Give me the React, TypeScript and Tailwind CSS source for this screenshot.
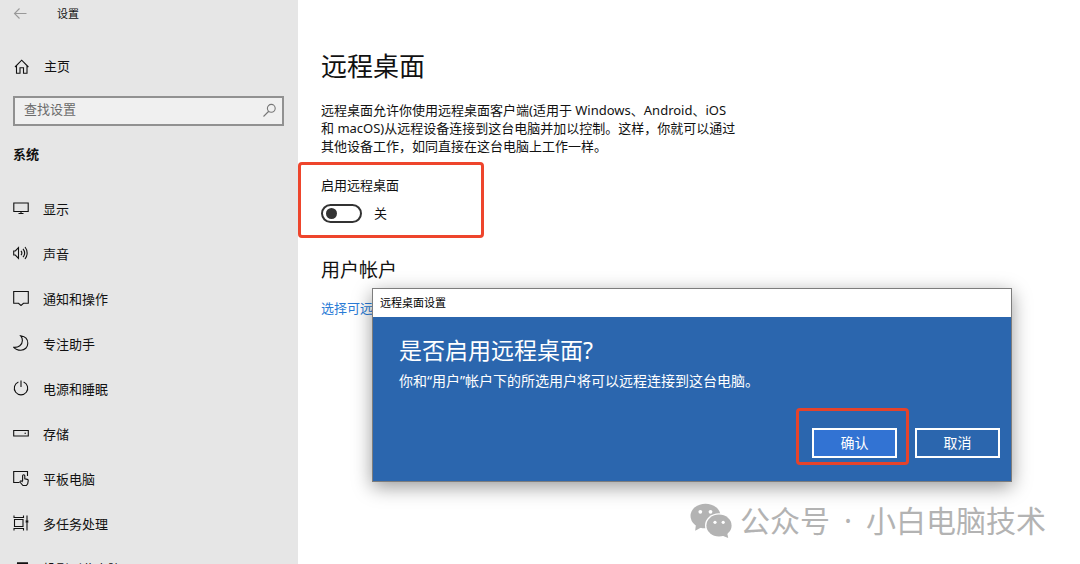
import { useState, type ReactNode } from 'react'

function Icon({ children }: { children: ReactNode }) {
  return (
    <svg
      className="size-4 shrink-0"
      viewBox="0 0 16 16"
      fill="none"
      stroke="currentColor"
      strokeWidth="1.1"
      aria-hidden="true"
    >
      {children}
    </svg>
  )
}

function WeChatLogo() {
  return (
    <svg className="h-9 w-[42px]" viewBox="0 0 42 36" fill="currentColor" aria-hidden="true">
      <ellipse cx="15.5" cy="13" rx="15" ry="12.3" />
      <path d="M6 21 5.200 27.800 12 24z" />
      <ellipse cx="29" cy="22.500" rx="14" ry="12.300" fill="#fff" />
      <ellipse cx="29" cy="22.500" rx="12.600" ry="11" />
      <path d="M37 29l1.200 6L32 32.500z" />
      <g fill="#fff">
        <circle cx="10.300" cy="8.800" r="1.900" />
        <circle cx="20.500" cy="8.800" r="1.900" />
        <circle cx="25" cy="19.300" r="1.600" />
        <circle cx="33.200" cy="19.300" r="1.600" />
      </g>
    </svg>
  )
}

const items = [
  {
    label: '显示',
    icon: <path d="M.8 3h14.4v8.5H.8zM8 11.500v2M5.500 13.500h5" />,
  },
  {
    label: '声音',
    icon: (
      <path d="M.7 6h1.600l3.200-3.400v10.800L2.300 10H.7zM8 5.800a3.600 3.600 0 0 1 0 4.400M10 3.900a6.500 6.500 0 0 1 0 8.200M12 2a9.500 9.500 0 0 1 0 12" />
    ),
  },
  {
    label: '通知和操作',
    icon: <path d="M.7 1.500h14.600v11.800h-4.800L8 15.500l-2.500-2.200H.7z" />,
  },
  {
    label: '专注助手',
    icon: (
      <path d="M7.700.8C12 1.400 14.800 4.400 14.800 8.300c0 4-3 6.900-6.900 6.900-3 0-5.500-1-7.100-2.900C5.500 12.600 9.400 10 9.400 5.600 9.400 3.700 8.800 2 7.700.8z" />
    ),
  },
  {
    label: '电源和睡眠',
    icon: <path d="M5.400 2a6.700 6.700 0 1 0 5.200 0M8 .500v6.500" />,
  },
  {
    label: '存储',
    icon: <path d="M.700 5.500h14.600v5.500H.700zM11.500 8.200h1.500" />,
  },
  {
    label: '平板电脑',
    icon: (
      <>
        <path d="M6.500 12.500H.700v-11h13.800v4.500" />
        <path d="M9.600 11V5.800a1.100 1.100 0 0 1 2.200 0v3l2.500.600q1.100.300.900 1.500l-.500 2.900-1.400 1.700h-3.300L7.300 12.500c-.800-1.200.500-2.200 1.400-1.400l.900.900" />
      </>
    ),
  },
  {
    label: '多任务处理',
    icon: (
      <>
        <path d="M1 .500v2h9.500v-2M1 15.500v-2h9.500v2M1.500 4.500h8.500v7H1.500zM14 .500V5M14 8v7.500" />
        <path d="M12.700 5.200h2.600v2.600h-2.600z" fill="currentColor" stroke="none" />
      </>
    ),
  },
  {
    label: '投影到此电脑',
    icon: <path d="M4.500 3.500h10v8H9M4.500 3v3.500M1 8h6v6H1zM4 2.800h11" />,
  },
]

function Sidebar() {
  return (
    <aside className="w-[298px] shrink-0 bg-[#e6e6e6]">
      <div className="flex h-7 items-center gap-7 px-[13px]">
        <button type="button" aria-label="返回" className="text-[#999]">
          <Icon>
            <path d="M13.500 7.500h-12M6.500 2.500l-5 5 5 5" />
          </Icon>
        </button>
        <span className="text-[11px]">设置</span>
      </div>

      <a href="#home" className="mt-[19px] flex h-10 items-center gap-[14px] px-[14px]">
        <Icon>
          <path d="M1 8 7.700 1.200 14.400 8M2.500 6.700v7.500H6V8.700h3.500v5.500H13V6.700" />
        </Icon>
        主页
      </a>

      <div className="relative mx-[13px] mt-[9px] mr-[14px]">
        <input
          type="text"
          aria-label="查找设置"
          placeholder="查找设置"
          className="block h-[30px] w-full border-2 border-[#919191] bg-[#f0f0f0] pr-8 pb-1 pl-[9px] placeholder:text-[#6b6b6b]"
        />
        <span className="absolute top-[7px] right-[6px] text-[#777]">
          <Icon>
            <path d="M1.500 13.500l5-5M13.200 5.300a3.900 3.900 0 1 1-7.800 0 3.900 3.900 0 0 1 7.800 0z" />
          </Icon>
        </span>
      </div>

      <h2 className="mt-[18px] px-[13px] leading-5 font-bold">系统</h2>

      <nav className="mt-[23px]">
        {items.map(item => (
          <a key={item.label} href="#" className="flex h-[45px] items-center gap-[14px] px-[13px]">
            <span className="pb-[3px]">
              <Icon>{item.icon}</Icon>
            </span>
            {item.label}
          </a>
        ))}
      </nav>
    </aside>
  )
}

function Dialog() {
  return (
    <div
      role="dialog"
      aria-labelledby="dialog-title"
      className="absolute top-[288px] left-[372px] w-[640px] border border-[#7d7d7d] bg-[#2b66ae] text-white shadow-[0_5px_18px_rgba(0,0,0,0.4)]"
    >
      <div className="h-7 bg-white px-[7px] text-[11px] leading-7 text-black">远程桌面设置</div>
      <div className="px-[11px] pt-[15px] pb-[23px]">
        <div className="px-[15px]">
          <h2 id="dialog-title" className="text-[23px] leading-9">是否启用远程桌面?</h2>
          <p className="text-[14px] leading-[26px]">你和“用户”帐户下的所选用户将可以远程连接到这台电脑。</p>
        </div>
        <div className="mt-[34px] flex justify-end gap-[18px]">
          <div className="relative">
            <button type="button" className="h-[30px] w-[85px] border-2 border-white bg-[#3273d3] text-[14px] leading-6">
              确认
            </button>
            <span className="pointer-events-none absolute -top-5 -right-3 -bottom-[7px] -left-4 rounded border-3 border-[#e5432b]" />
          </div>
          <button type="button" className="h-[30px] w-[85px] border-2 border-white text-[14px] leading-6">
            取消
          </button>
        </div>
      </div>
    </div>
  )
}

export default function App() {
  const [enabled, setEnabled] = useState(false)

  return (
    <div className="relative flex h-screen overflow-hidden bg-white font-['Noto_Sans','Noto_Sans_CJK_SC',sans-serif] text-[13px] text-[#111]">
      <Sidebar />

      <main className="min-w-0 flex-1 px-[23px] pt-[46px]">
        <h1 className="text-[26px] leading-10">远程桌面</h1>
        <p className="mt-[15px] max-w-[420px] leading-[18px]">
          远程桌面允许你使用远程桌面客户端(适用于 Windows、Android、iOS 和
          macOS)从远程设备连接到这台电脑并加以控制。这样，你就可以通过其他设备工作，如同直接在这台电脑上工作一样。
        </p>

        <div className="mt-[7px] -ml-[23px] h-[76px] w-[186px] rounded border-3 border-[#ee452c] px-5 pt-[10px]">
          <label htmlFor="remote" className="block leading-5">启用远程桌面</label>
          <div className="mt-2 flex items-center gap-3">
            <input
              id="remote"
              type="checkbox"
              role="switch"
              checked={enabled}
              onChange={e => setEnabled(e.target.checked)}
              className="h-[19px] w-[41px] appearance-none rounded-full border-2 border-[#333] bg-white before:mt-[2px] before:ml-[3px] before:block before:size-[11px] before:rounded-full before:bg-[#333] checked:before:ml-[23px]"
            />
            <span className="leading-5">{enabled ? '开' : '关'}</span>
          </div>
        </div>

        <h2 className="mt-4 text-[19px] leading-8">用户帐户</h2>
        <a href="#users" className="mt-3 block leading-5 text-[#2a7bd6]">
          选择可远程访问这台电脑的用户
        </a>
      </main>

      <Dialog />

      {/* Watermark */}
      <div className="absolute right-[34px] bottom-[23px] flex items-center gap-2 text-[#b3b3b3]">
        <WeChatLogo />
        <div className="flex gap-[14px] text-[30px] leading-10">
          <span>公众号</span>
          <span>·</span>
          <span>小白电脑技术</span>
        </div>
      </div>
    </div>
  )
}
